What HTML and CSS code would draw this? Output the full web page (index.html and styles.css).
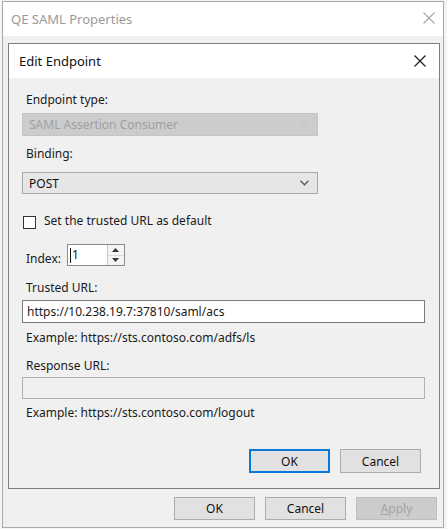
FILE: index.html
```html
<!DOCTYPE html>
<html>
<head>
<meta charset="utf-8">
<link rel="stylesheet" href="styles.css">
</head>
<body>
<div class="window">
  <div class="titlebar">
    <span class="title">QE SAML Properties</span>
    <svg class="close outer-close" width="12" height="12" viewBox="0 0 12 12"><path d="M0.5 0.5 L11.5 11.5 M11.5 0.5 L0.5 11.5" stroke="#a8a8a8" stroke-width="1.2" fill="none"/></svg>
  </div>
  <div class="win-body">
    <div class="dialog">
      <div class="dlg-title">
        <span class="dlg-title-text">Edit Endpoint</span>
        <svg class="close" width="12" height="12" viewBox="0 0 12 12"><path d="M0.5 0.5 L11.5 11.5 M11.5 0.5 L0.5 11.5" stroke="#1a1a1a" stroke-width="1.2" fill="none"/></svg>
      </div>
      <div class="dlg-body">
        <div class="label l-type">Endpoint type:</div>
        <div class="select select-disabled">
          <span>SAML Assertion Consumer</span>
          <svg width="9" height="6" viewBox="0 0 9 6"><path d="M0.5 0.8 L4.5 4.8 L8.5 0.8" stroke="#c4c4c4" stroke-width="1.2" fill="none"/></svg>
        </div>
        <div class="label l-binding">Binding:</div>
        <div class="select select-enabled">
          <span>POST</span>
          <svg width="9" height="6" viewBox="0 0 9 6"><path d="M0.5 0.8 L4.5 4.8 L8.5 0.8" stroke="#555" stroke-width="1.3" fill="none"/></svg>
        </div>
        <div class="check-row">
          <span class="checkbox"></span>
          <span class="check-label">Set the trusted URL as default</span>
        </div>
        <div class="index-row">
          <span class="index-label">Index:</span>
          <div class="spinner">
            <span class="spin-value"><span class="caret"></span>1</span>
            <div class="spin-buttons">
              <span class="spin-btn"><svg width="7" height="4" viewBox="0 0 7 4"><path d="M0 4 L3.5 0 L7 4 Z" fill="#333"/></svg></span>
              <span class="spin-btn"><svg width="7" height="4" viewBox="0 0 7 4"><path d="M0 0 L3.5 4 L7 0 Z" fill="#333"/></svg></span>
            </div>
          </div>
        </div>
        <div class="label l-trusted">Trusted URL:</div>
        <div class="input input-active">https://10.238.19.7:37810/saml/acs</div>
        <div class="label l-example1">Example: https://sts.contoso.com/adfs/ls</div>
        <div class="label l-response">Response URL:</div>
        <div class="input input-disabled"></div>
        <div class="label l-example2">Example: https://sts.contoso.com/logout</div>
        <div class="btn-row inner-btns">
          <span class="btn btn-default">OK</span>
          <span class="btn">Cancel</span>
        </div>
      </div>
    </div>
    <div class="btn-row outer-btns">
      <span class="btn">OK</span>
      <span class="btn">Cancel</span>
      <span class="btn btn-disabled"><u>A</u>pply</span>
    </div>
  </div>
</div>
</body>
</html>
```

FILE: styles.css
```css
* { box-sizing: border-box; }
html, body { margin: 0; padding: 0; }
body {
  background: #f4f4f4;
  font-family: "Noto Sans", "Open Sans", sans-serif;
  font-size: 12px;
  color: #1a1a1a;
  width: 447px;
  height: 529px;
  overflow: hidden;
}
.window {
  margin: 1px 0 0 2px;
  width: 442px;
  height: 527px;
  border: 1px solid #a9a9a9;
  background: #f0f0f0;
  display: flex;
  flex-direction: column;
}
.titlebar {
  height: 34px;
  background: #fff;
  display: flex;
  align-items: center;
  justify-content: space-between;
  padding: 0 8px 0 8px;
  flex: none;
}
.title {
  font-size: 13px;
  color: #9a9a9a;
  margin-top: -1px;
}
.outer-close { margin-top: -3px; }
.win-body {
  flex: 1;
  padding: 7px 3px 0 5px;
  display: flex;
  flex-direction: column;
}
.dialog {
  border: 1px solid #7d7d7d;
  background: #f0f0f0;
  height: 446px;
  display: flex;
  flex-direction: column;
}
.dlg-title {
  height: 34px;
  background: #fff;
  display: flex;
  align-items: center;
  justify-content: space-between;
  padding: 0 13px 0 10px;
  flex: none;
}
.dlg-title-text { font-size: 13px; color: #111; }
.dlg-body {
  padding: 14px 13px 0 13px;
  display: flex;
  flex-direction: column;
}
.label {
  line-height: 16px;
  height: 16px;
  padding-left: 4px;
  white-space: nowrap;
}
.l-binding { margin-top: 10px; }
.l-trusted { margin-top: 14px; }
.l-example1 { margin-top: 7px; }
.l-response { margin-top: 12px; }
.l-example2 { margin-top: 6px; }
.select {
  width: 296px;
  display: flex;
  align-items: center;
  justify-content: space-between;
  padding: 0 8px 0 6px;
}
.select-disabled {
  margin-top: 5px;
  height: 23px;
  background: #cccccc;
  border: 1px solid #c4c4c4;
  color: #9f9f9f;
}
.select-enabled {
  margin-top: 10px;
  height: 22px;
  background: #e6e6e6;
  border: 1px solid #a8a8a8;
  color: #111;
}
.check-row {
  margin-top: 19px;
  height: 16px;
  display: flex;
  align-items: center;
  padding-left: 1px;
}
.checkbox {
  width: 13px;
  height: 13px;
  border: 1px solid #333;
  background: #fff;
  margin-top: 3px;
}
.check-label { margin-left: 8px; line-height: 16px; }
.index-row {
  margin-top: 15px;
  height: 22px;
  display: flex;
  align-items: flex-end;
  padding-left: 4px;
}
.index-label { line-height: 16px; margin-bottom: -1px; }
.spinner {
  margin-left: 6px;
  width: 58px;
  height: 22px;
  border: 1px solid #8a8a8a;
  background: #fff;
  display: flex;
  align-self: stretch;
}
.spin-value {
  flex: 1;
  display: flex;
  align-items: center;
  padding-left: 2px;
  line-height: 16px;
}
.caret {
  width: 1px;
  height: 15px;
  background: #111;
  margin-right: 1px;
}
.spin-buttons {
  width: 17px;
  border-left: 1px solid #c8c8c8;
  display: flex;
  flex-direction: column;
}
.spin-btn {
  flex: 1;
  display: flex;
  align-items: center;
  justify-content: center;
  background: #f4f4f4;
}
.spin-btn + .spin-btn { border-top: 1px solid #d8d8d8; }
.input {
  width: 403px;
  padding: 0 4px;
  display: flex;
  align-items: center;
  white-space: nowrap;
}
.input-active {
  margin-top: 4px;
  height: 23px;
  background: #fff;
  border: 1px solid #7a7a7a;
}
.input-disabled {
  margin-top: 3px;
  height: 22px;
  background: #efefef;
  border: 1px solid #b0b0b0;
}
.btn-row {
  display: flex;
  justify-content: flex-end;
  gap: 10px;
}
.inner-btns {
  margin-top: 28px;
  padding-right: 2px;
  margin-right: 3px;
}
.btn {
  width: 81px;
  height: 24px;
  background: #e1e1e1;
  border: 1px solid #adadad;
  display: flex;
  align-items: center;
  justify-content: center;
  color: #111;
}
.btn-default {
  border: 2px solid #0a78d7;
}
.outer-btns {
  margin-top: 8px;
  padding-right: 3px;
}
.outer-btns .btn { height: 23px; }
.btn-disabled {
  background: #cccccc;
  border-color: #bfbfbf;
  color: #a3a3a3;
}
.btn-disabled u { text-decoration-thickness: 1px; }
```
